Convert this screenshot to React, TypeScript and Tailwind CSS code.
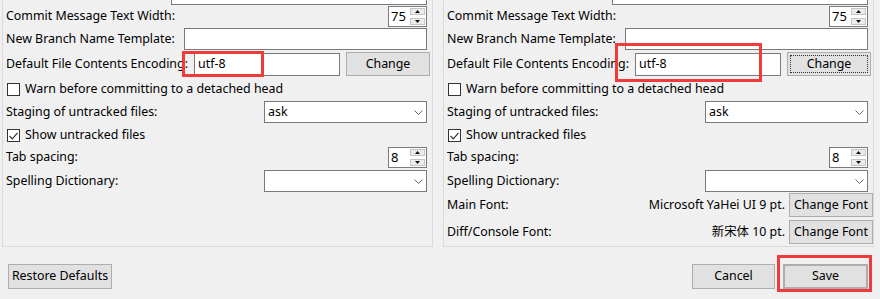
import type { ReactNode } from 'react'

function Chevron() {
  return (
    <svg width="9" height="5" viewBox="0 0 9 5" className="mr-[3px]">
      <path d="M0.5 0.5 L4.5 4.5 L8.5 0.5" fill="none" stroke="#666" strokeWidth="1" />
    </svg>
  )
}

function SpinBtn({ up }: { up?: boolean }) {
  return (
    <div className="flex h-[7px] w-[15px] items-center justify-center border border-[#c4c4c4] bg-[#ececec]">
      <svg width="5" height="3" viewBox="0 0 5 3">
        {up ? <path d="M0 3 L2.5 0 L5 3 Z" fill="#111" /> : <path d="M0 0 L2.5 3 L5 0 Z" fill="#111" />}
      </svg>
    </div>
  )
}

function Spinner({ value }: { value: string }) {
  return (
    <div className="ml-auto flex h-[21px] w-[39px] items-center justify-between border border-[#7a7a7a] bg-white pl-[2px] pr-[1px]">
      <span className="text-[13px] leading-none">{value}</span>
      <div className="flex flex-col gap-[3px]">
        <SpinBtn up />
        <SpinBtn />
      </div>
    </div>
  )
}

function Select({ value }: { value?: string }) {
  return (
    <div className="ml-auto flex h-[22px] w-[163px] items-center justify-between border border-[#7a7a7a] bg-white pl-[3px]">
      <span>{value}</span>
      <Chevron />
    </div>
  )
}

function Btn({ children, className = '' }: { children: ReactNode; className?: string }) {
  return (
    <div className={`flex items-center justify-center border border-[#adadad] bg-[#e1e1e1] ${className}`}>
      {children}
    </div>
  )
}

function Check({ checked }: { checked?: boolean }) {
  return (
    <div className="flex h-[13px] w-[13px] items-center justify-center border border-[#333] bg-white">
      {checked && (
        <svg width="9" height="8" viewBox="0 0 9 8">
          <path d="M0.5 4 L3.3 6.8 L8.5 0.8" fill="none" stroke="#333" strokeWidth="1.2" />
        </svg>
      )}
    </div>
  )
}

function Row({ className = '', children }: { className?: string; children: ReactNode }) {
  return <div className={`flex items-center ${className}`}>{children}</div>
}

function Panel({ fonts, focused }: { fonts?: boolean; focused?: boolean }) {
  return (
    <div className="flex flex-col">
      <div className="ml-[2px] mt-[-24px] flex h-[271px] w-[431px] flex-col border border-[#dadada] pl-[3px] pr-[5px] pt-[6px]">
        <Row className="h-[22px]">
          <div className="ml-auto h-[22px] w-[256px] border border-[#7a7a7a] bg-white" />
        </Row>
        <Row className="mt-[1px] h-[21px]">
          <span>Commit Message Text Width:</span>
          <Spinner value="75" />
        </Row>
        <Row className="mt-[1px] h-[22px]">
          <span>New Branch Name Template:</span>
          <div className="ml-auto h-[22px] w-[243px] border border-[#7a7a7a] bg-white" />
        </Row>
        <Row className="mt-[2px] h-[24px]">
          <span>Default File Contents Encoding:</span>
          <div className="ml-auto flex h-[23px] w-[146px] items-center border border-[#7a7a7a] bg-white pl-[3px]">
            utf-8
          </div>
          <Btn className="relative ml-[6px] mr-[-3px] h-[24px] w-[84px]">
            {focused && <div className="absolute inset-[2px] border border-dotted border-[#333]" />}
            Change
          </Btn>
        </Row>
        <Row className="mt-[2px] h-[23px] gap-[5px] pl-[1px]">
          <Check />
          <span>Warn before committing to a detached head</span>
        </Row>
        <Row className="h-[22px]">
          <span>Staging of untracked files:</span>
          <Select value="ask" />
        </Row>
        <Row className="mt-[1px] h-[23px] gap-[5px] pl-[1px]">
          <Check checked />
          <span>Show untracked files</span>
        </Row>
        <Row className="h-[21px]">
          <span>Tab spacing:</span>
          <Spinner value="8" />
        </Row>
        <Row className="mt-[2px] h-[22px]">
          <span>Spelling Dictionary:</span>
          <Select />
        </Row>
        {fonts && (
          <>
            <Row className="mt-[1px] h-[24px]">
              <span>Main Font:</span>
              <span className="ml-auto">Microsoft YaHei UI 9 pt.</span>
              <Btn className="ml-[4px] mr-[-5px] h-[24px] w-[84px]">Change Font</Btn>
            </Row>
            <Row className="mt-[3px] h-[24px]">
              <span>Diff/Console Font:</span>
              <span className="ml-auto">新宋体 10 pt.</span>
              <Btn className="ml-[4px] mr-[-5px] h-[24px] w-[84px]">Change Font</Btn>
            </Row>
          </>
        )}
      </div>
      {fonts ? (
        <div className="mt-[17px] flex justify-end gap-[8px] pr-[12px]">
          <Btn className="h-[25px] w-[83px]">Cancel</Btn>
          <Btn className="h-[25px] w-[85px] border-2 border-[#0078d7]">Save</Btn>
        </div>
      ) : (
        <div className="mt-[17px] flex pl-[8px]">
          <Btn className="h-[25px] w-[104px]">Restore Defaults</Btn>
        </div>
      )}
    </div>
  )
}

export default function App() {
  return (
    <div className="relative flex h-[299px] w-[880px] overflow-hidden bg-[#f0f0f0] font-['Noto_Sans','Noto_Sans_CJK_SC',sans-serif] text-[12.4px] leading-none text-black">
      <div className="w-[441px] shrink-0">
        <Panel />
      </div>
      <div className="w-[439px] shrink-0">
        <Panel fonts focused />
      </div>

      {/* red annotation boxes */}
      <div className="absolute left-[182px] top-[51px] h-[26px] w-[82px] border-[3px] border-[#ef3b3b]" />
      <div className="absolute left-[615px] top-[43px] h-[39px] w-[147px] border-[3px] border-[#ef3b3b]" />
      <div className="absolute left-[777px] top-[255px] h-[37px] w-[95px] border-[3px] border-[#ef3b3b]" />
    </div>
  )
}
